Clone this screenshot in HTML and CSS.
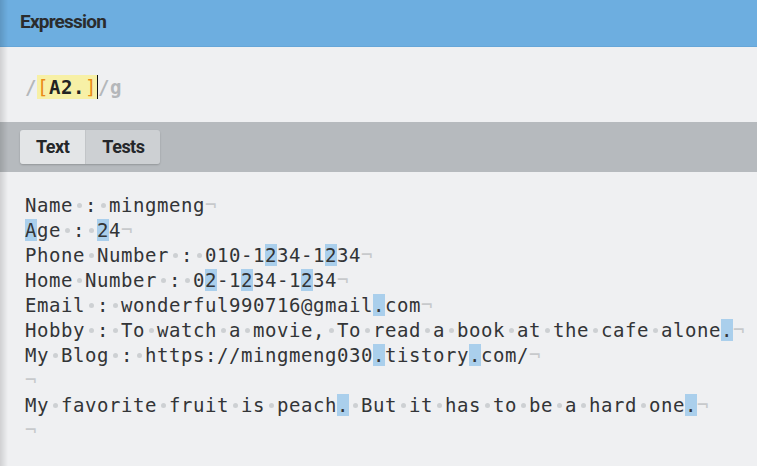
FILE: index.html
```html
<!DOCTYPE html>
<html>

<head>
    <title>Expression</title>
    <meta charset="utf-8">
    <meta name="viewport" content="width=device-width, initial-scale=1">
    <link rel="stylesheet" href="styles.css">
</head>

<body>
    <div class="app">
        <div class="panel-title">Expression</div>

        <div class="expression">
            <span class="slash">/</span><span class="set"><span class="bracket">[</span><b>A2.</b><span class="bracket">]</span></span><span class="caret"></span><span class="slash">/g</span>
        </div>

        <div class="tab-bar">
            <div class="tabs">
                <span class="tab selected">Text</span>
                <span class="tab">Tests</span>
            </div>
        </div>

        <!-- <i></i> marks a visible space -->
        <div class="source">
            <div class="line">Name<i></i>:<i></i>mingmeng<em>¬</em></div>
            <div class="line"><mark>A</mark>ge<i></i>:<i></i><mark>2</mark>4<em>¬</em></div>
            <div class="line">Phone<i></i>Number<i></i>:<i></i>010-1<mark>2</mark>34-1<mark>2</mark>34<em>¬</em></div>
            <div class="line">Home<i></i>Number<i></i>:<i></i>0<mark>2</mark>-1<mark>2</mark>34-1<mark>2</mark>34<em>¬</em></div>
            <div class="line">Email<i></i>:<i></i>wonderful990716@gmail<mark>.</mark>com<em>¬</em></div>
            <div class="line">Hobby<i></i>:<i></i>To<i></i>watch<i></i>a<i></i>movie,<i></i>To<i></i>read<i></i>a<i></i>book<i></i>at<i></i>the<i></i>cafe<i></i>alone<mark>.</mark><em>¬</em></div>
            <div class="line">My<i></i>Blog<i></i>:<i></i>https://mingmeng030<mark>.</mark>tistory<mark>.</mark>com/<em>¬</em></div>
            <div class="line"><em>¬</em></div>
            <div class="line">My<i></i>favorite<i></i>fruit<i></i>is<i></i>peach<mark>.</mark><i></i>But<i></i>it<i></i>has<i></i>to<i></i>be<i></i>a<i></i>hard<i></i>one<mark>.</mark><em>¬</em></div>
            <div class="line"><em>¬</em></div>
        </div>
    </div>
</body>

</html>
```

FILE: styles.css
```css
body,
html {
    margin: 0;
    padding: 0;
    background-color: #eff0f2;
}

.app {
    width: 757px;
    height: 466px;
    overflow: hidden;
    background-color: #eff0f2;
}

/* soft shadow on the left edge of the panel */
.app::before {
    content: "";
    position: fixed;
    top: 0;
    bottom: 0;
    left: 0;
    width: 8px;
    background: linear-gradient(to right, rgba(0, 0, 0, 0.13), rgba(0, 0, 0, 0));
    z-index: 2;
}

.panel-title {
    height: 46px;
    line-height: 44px;
    padding-left: 20px;
    background-color: #6daee0;
    border-bottom: 1px solid #66a6d8;
    font-family: Roboto, sans-serif;
    font-weight: bold;
    font-size: 19px;
    letter-spacing: -0.8px;
    color: #2a2c2e;
}

.expression {
    height: 70px;
    padding-top: 5px;
    display: flex;
    align-items: center;
    padding-left: 25px;
    font-family: "DejaVu Sans Mono", monospace;
    font-size: 19px;
    letter-spacing: 0.56px;
    color: #232323;
}

.expression .slash {
    color: #b4b7ba;
    font-weight: bold;
}

.expression .set {
    background-color: #f7f0a6;
    line-height: 24px;
}

.expression .bracket {
    color: #ea8a14;
}

.expression .caret {
    width: 1px;
    height: 24px;
    background-color: #111;
}

.tab-bar {
    height: 50px;
    background-color: #b6babe;
    display: flex;
    align-items: center;
    padding-left: 20px;
}

.tabs {
    display: flex;
    border-radius: 3px;
    box-shadow: 0 1px 2px rgba(0, 0, 0, 0.2);
    overflow: hidden;
}

.tab {
    font-family: Roboto, sans-serif;
    font-weight: bold;
    font-size: 18px;
    letter-spacing: -0.5px;
    color: #25272a;
    height: 34px;
    line-height: 34px;
    padding: 0 16px;
    background-color: #cdd0d3;
}

.tab.selected {
    background-color: #e3e5e7;
    border-right: 1px solid #c2c5c8;
}

.source {
    padding: 21px 0 0 25px;
    font-family: "DejaVu Sans Mono", monospace;
    font-size: 19px;
    letter-spacing: 0.56px;
    line-height: 25px;
    color: #333537;
}

.line {
    white-space: pre;
    height: 25px;
}

/* visible whitespace marker, one character cell wide */
.source i {
    display: inline-flex;
    align-items: center;
    justify-content: center;
    width: 12px;
    height: 25px;
    vertical-align: top;
}

.source i::before {
    content: "";
    width: 5px;
    height: 5px;
    border-radius: 50%;
    background-color: #cdd0d3;
}

.source em {
    font-style: normal;
    color: #c7c9cc;
}

.source mark {
    background-color: #aacfec;
    color: inherit;
}
```
